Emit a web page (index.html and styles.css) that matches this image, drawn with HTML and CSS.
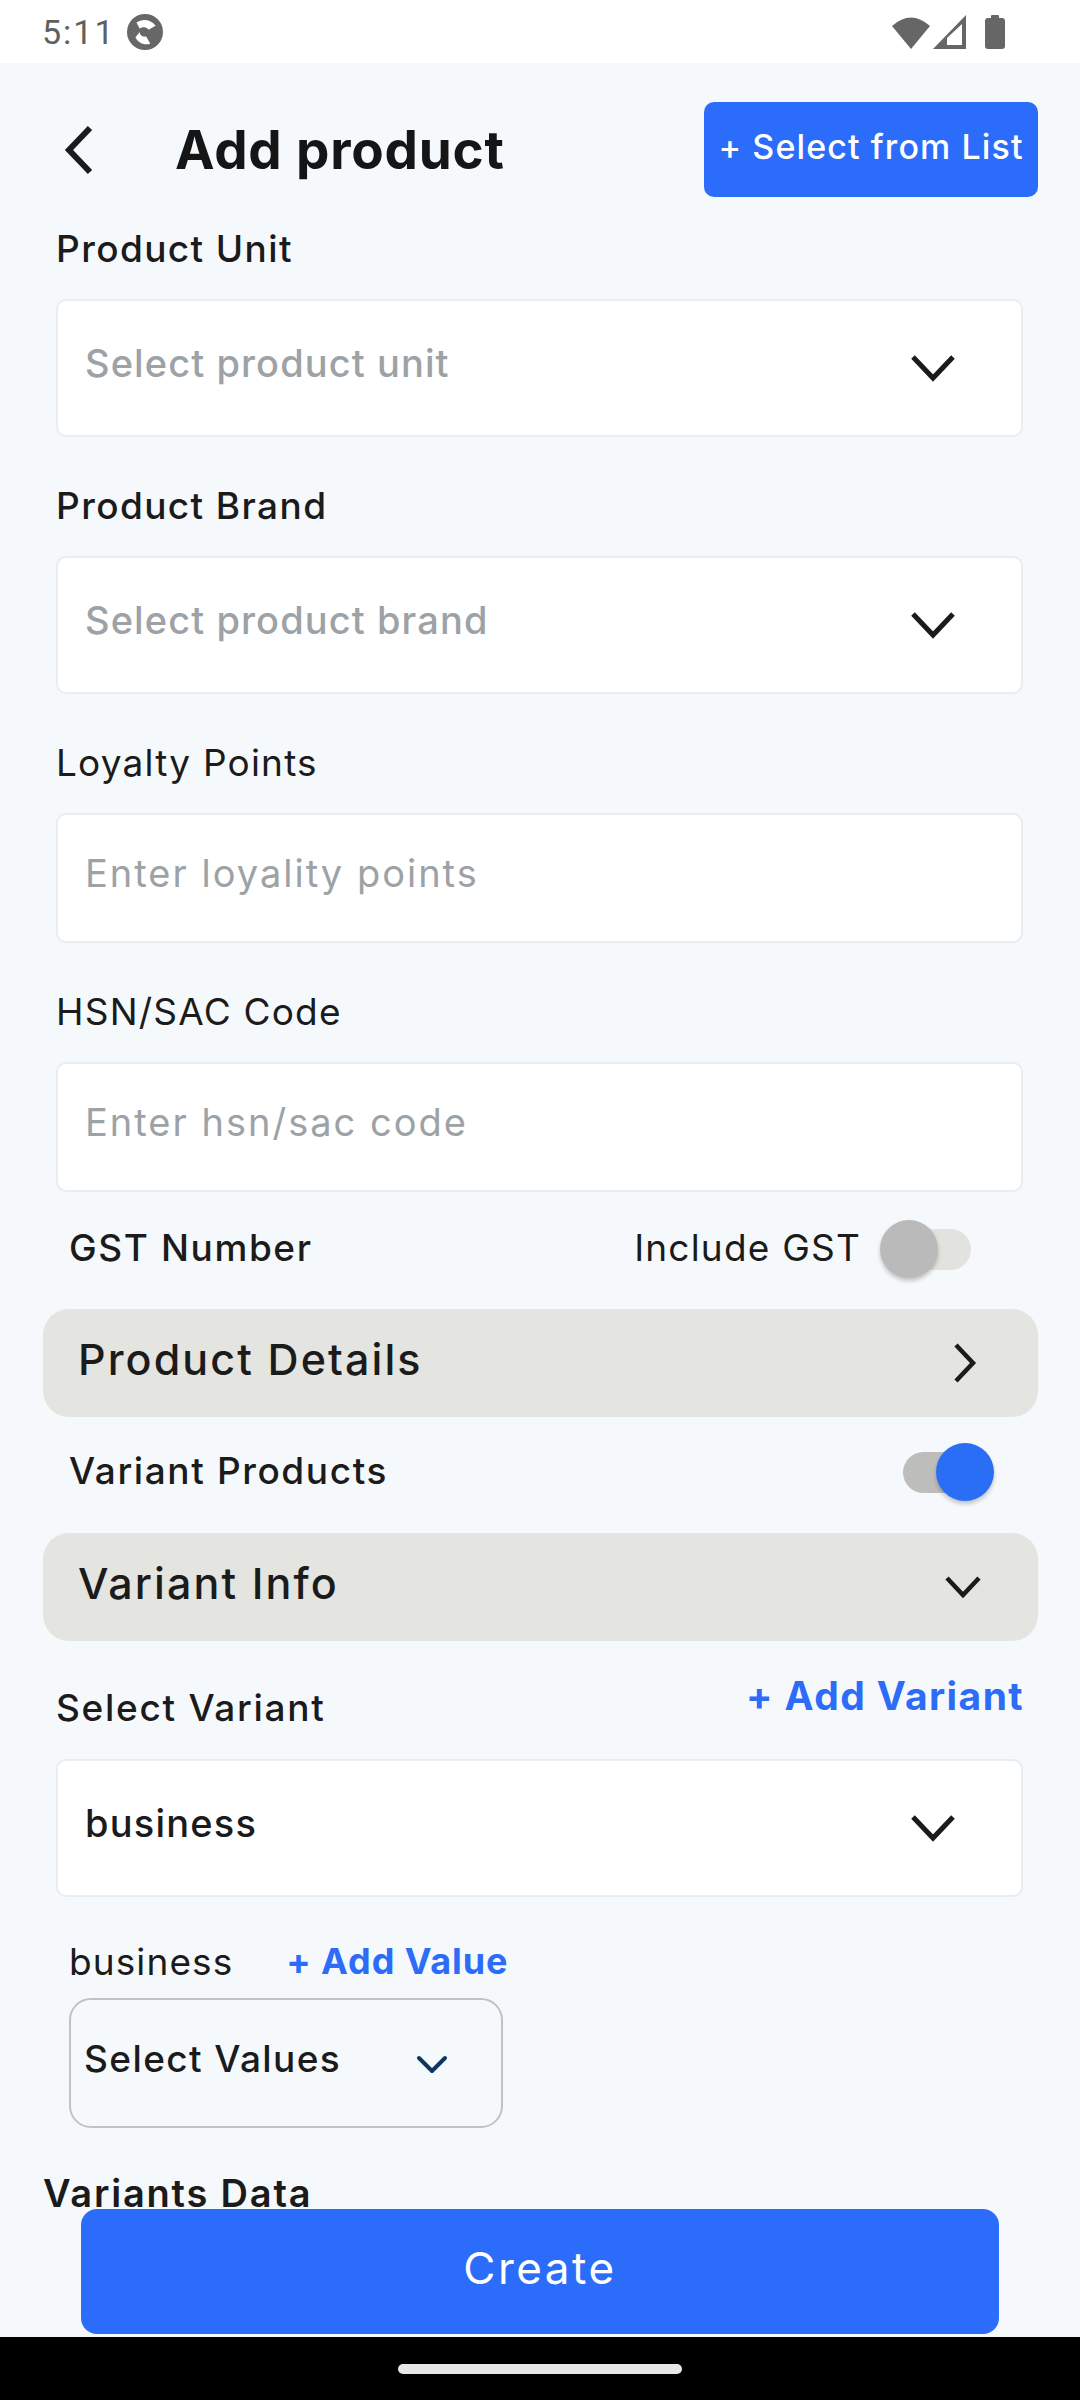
FILE: index.html
```html
<!DOCTYPE html>
<html>
<head>
<meta charset="utf-8">
<link rel="stylesheet" href="styles.css">
</head>
<body>
<div class="phone">
  <div class="statusbar">
    <span class="time">5:11</span>
    <svg class="app-icon" width="36" height="36" viewBox="0 0 34 34">
      <circle cx="17" cy="17" r="17" fill="#676767"/>
      <path d="M9 8 C14 4 23 5 27 11 L20 15 C18 12 14 12 12 14 Z" fill="#fff"/>
      <path d="M8 22 C10 27 16 30 22 28 L18 21 C15 22 12 20 12 17 Z" fill="#fff"/>
      <circle cx="17" cy="17" r="4" fill="#676767"/>
    </svg>
    <div class="sys-icons">
      <svg width="38" height="34" viewBox="0 0 38 34"><path d="M19 34 L0 11 Q19 -6 38 11 Z" fill="#666"/></svg>
      <svg width="33" height="34" viewBox="0 0 33 34"><path d="M33 0 L33 34 L0 34 Z" fill="#666"/><path d="M14 30 L14 23 L29 9 L29 30 Z" fill="#fff"/></svg>
      <svg width="20" height="34" viewBox="0 0 20 34"><rect x="6" y="0" width="8" height="4" rx="1" fill="#666"/><rect x="0" y="3" width="20" height="31" rx="3" fill="#666"/></svg>
    </div>
  </div>

  <div class="screen">
    <div class="scroll">
      <header class="topbar">
        <svg class="back" width="30" height="50" viewBox="0 0 30 50"><path d="M26 3 L5 25 L26 47" fill="none" stroke="#1b1b1b" stroke-width="6"/></svg>
        <h1 class="title">Add product</h1>
        <button class="list-btn">+ Select from List</button>
      </header>

      <div class="form">
        <div class="field field-first">
          <div class="label label-medium">Product Unit</div>
          <div class="box box-select">
            <span class="ph ph-medium">Select product unit</span>
            <svg class="chev" width="46" height="28" viewBox="0 0 46 28"><path d="M3 3 L23 24 L43 3" fill="none" stroke="#1b1b1b" stroke-width="5"/></svg>
          </div>
        </div>

        <div class="field">
          <div class="label label-medium">Product Brand</div>
          <div class="box box-select">
            <span class="ph ph-medium">Select product brand</span>
            <svg class="chev" width="46" height="28" viewBox="0 0 46 28"><path d="M3 3 L23 24 L43 3" fill="none" stroke="#1b1b1b" stroke-width="5"/></svg>
          </div>
        </div>

        <div class="field">
          <div class="label">Loyalty Points</div>
          <div class="box box-input">
            <span class="ph">Enter loyality points</span>
          </div>
        </div>

        <div class="field">
          <div class="label">HSN/SAC Code</div>
          <div class="box box-input">
            <span class="ph">Enter hsn/sac code</span>
          </div>
        </div>

        <div class="row row-gst">
          <span class="row-text">GST Number</span>
          <div class="gst-right">
            <span class="row-text row-text-regular">Include GST</span>
            <div class="switch">
              <div class="track"></div>
              <div class="thumb"></div>
            </div>
          </div>
        </div>

        <div class="bar bar-details">
          <span class="bar-title">Product Details</span>
          <svg class="chev-right" width="24" height="40" viewBox="0 0 24 40"><path d="M3 2 L20 20 L3 38" fill="none" stroke="#1b1b1b" stroke-width="4.5"/></svg>
        </div>

        <div class="row row-variant">
          <span class="row-text">Variant Products</span>
          <div class="switch switch-on">
            <div class="track"></div>
            <div class="thumb"></div>
          </div>
        </div>

        <div class="bar bar-info">
          <span class="bar-title">Variant Info</span>
          <svg class="chev-down-sm" width="36" height="22" viewBox="0 0 36 22"><path d="M2 2 L18 19 L34 2" fill="none" stroke="#1b1b1b" stroke-width="4.5"/></svg>
        </div>

        <div class="variant-head">
          <span class="label label-medium variant-label">Select Variant</span>
          <span class="link link-variant">+ Add Variant</span>
        </div>
        <div class="box box-select box-variant">
          <span class="value">business</span>
          <svg class="chev" width="46" height="28" viewBox="0 0 46 28"><path d="M3 3 L23 24 L43 3" fill="none" stroke="#1b1b1b" stroke-width="5"/></svg>
        </div>

        <div class="value-head">
          <span class="value-label">business</span>
          <span class="link link-value">+ Add Value</span>
        </div>
        <div class="values-box">
          <span class="values-text">Select Values</span>
          <svg class="chev-navy" width="32" height="19" viewBox="0 0 32 19"><path d="M3 3 L16 16 L29 3" fill="none" stroke="#0b3760" stroke-width="4" stroke-linecap="round" stroke-linejoin="round"/></svg>
        </div>

        <div class="section-title">Variants Data</div>
      </div>
    </div>

    <div class="footer">
      <button class="create">Create</button>
    </div>
  </div>

  <div class="navbar"><div class="pill"></div></div>
</div>
</body>
</html>
```

FILE: styles.css
```css
* { box-sizing: border-box; }
html, body { margin: 0; padding: 0; }
body {
  width: 1080px;
  height: 2400px;
  overflow: hidden;
  font-family: Inter, "Noto Sans", sans-serif;
  color: #1b1b1b;
  background: #f6f9fc;
}
.phone { width: 1080px; height: 2400px; display: flex; flex-direction: column; }

/* status bar */
.statusbar {
  height: 63px;
  background: #ffffff;
  display: flex;
  align-items: center;
  padding: 0 75px 0 42px;
}
.time {
  font-family: Roboto, sans-serif;
  font-size: 34px;
  color: #5f5f5f;
  letter-spacing: 2px;
}
.app-icon { margin-left: 11px; }
.sys-icons { margin-left: auto; display: flex; align-items: center; }
.sys-icons svg:nth-child(2) { margin-left: 3px; }
.sys-icons svg:nth-child(3) { margin-left: 19px; }

/* screen */
.screen {
  flex: 1;
  display: flex;
  flex-direction: column;
  background: #f6f9fc;
  min-height: 0;
}
.scroll { flex: 1; min-height: 0; }

.topbar {
  display: flex;
  align-items: center;
  height: 95px;
  margin-top: 39px;
  padding: 0 42px 0 64px;
}
.back { display: block; }
.title {
  margin: 0 0 0 81px;
  font-size: 53px;
  font-weight: 700;
  letter-spacing: 0.8px;
  color: #151515;
}
.list-btn {
  margin-left: auto;
  width: 334px;
  height: 95px;
  border: none;
  border-radius: 10px;
  background: #2b6cfa;
  color: #ffffff;
  font-family: Inter, sans-serif;
  font-size: 34px;
  font-weight: 500;
  letter-spacing: 1.1px;
  padding: 0 0 6px 0;
  white-space: nowrap;
}

.form { padding: 0 42px 0 43px; }

.field { margin: 45px 15px 0 13px; }
.field-first { margin-top: 28px; }
.label {
  height: 48px;
  line-height: 48px;
  font-size: 37px;
  font-weight: 400;
  letter-spacing: 1.2px;
  color: #1b1b1b;
  margin-bottom: 26px;
}
.label-medium { font-weight: 500; letter-spacing: 1.4px; }

.box {
  background: #ffffff;
  border: 2px solid #e8edf2;
  border-radius: 10px;
  display: flex;
  align-items: center;
  padding: 0 65px 0 27px;
}
.box-select { height: 138px; justify-content: space-between; }
.box-input { height: 130px; }
.ph {
  font-size: 38px;
  color: #9ca2a6;
  font-weight: 400;
  letter-spacing: 2px;
  margin-bottom: 10px;
}
.ph-medium { font-weight: 500; letter-spacing: 1.1px; }
.chev { display: block; }

/* rows with toggles */
.row {
  height: 60px;
  display: flex;
  align-items: center;
  justify-content: space-between;
  padding-left: 26px;
}
.row-gst { margin-top: 27px; padding-right: 56px; }
.row-variant { margin-top: 25px; padding-right: 44px; }
.row-text {
  font-size: 37px;
  font-weight: 500;
  letter-spacing: 1.6px;
  color: #1b1b1b;
  margin-bottom: 4px;
}
.row-text-regular { font-weight: 400; letter-spacing: 1.2px; }
.gst-right { display: flex; align-items: center; gap: 19px; }

.switch { position: relative; width: 102px; height: 58px; }
.track {
  position: absolute;
  left: 11px;
  top: 9px;
  width: 80px;
  height: 41px;
  border-radius: 21px;
  background: #e2e2de;
}
.thumb {
  position: absolute;
  left: 0;
  top: 0;
  width: 58px;
  height: 58px;
  border-radius: 50%;
  background: #bababa;
  box-shadow: 0 3px 4px rgba(0, 0, 0, 0.22);
}
.switch-on .track { background: #bdbdbb; }
.switch-on .thumb { left: 44px; background: #2a6ef6; }

/* grey bars */
.bar {
  height: 108px;
  border-radius: 26px;
  background: #e4e4e0;
  display: flex;
  align-items: center;
  justify-content: space-between;
  padding-left: 35px;
}
.bar-details { margin-top: 30px; padding-right: 61px; }
.bar-info { margin-top: 31px; padding-right: 57px; }
.bar-title {
  font-size: 43px;
  font-weight: 500;
  letter-spacing: 2.1px;
  color: #1b1b1b;
  margin-bottom: 8px;
}
.chev-right, .chev-down-sm { display: block; }

/* variant section */
.variant-head {
  display: flex;
  justify-content: space-between;
  align-items: flex-start;
  margin: 30px 14px 0 13px;
}
.variant-label { margin: 13px 0 0 0; letter-spacing: 1.7px; }
.link {
  color: #2d6cf6;
  font-weight: 700;
}
.link-variant { font-size: 39px; height: 50px; line-height: 50px; letter-spacing: 1.4px; }
.box-variant { margin: 27px 15px 0 13px; }
.value {
  font-size: 38px;
  font-weight: 500;
  letter-spacing: 1.2px;
  color: #1b1b1b;
  margin-bottom: 10px;
}

.value-head {
  display: flex;
  align-items: center;
  height: 48px;
  margin-top: 40px;
  padding-left: 26px;
  gap: 53px;
}
.value-label { font-size: 37px; font-weight: 400; letter-spacing: 1.1px; color: #1b1b1b; }
.link-value { font-size: 36px; letter-spacing: 0.9px; }

.values-box {
  margin: 13px 0 0 26px;
  width: 434px;
  height: 130px;
  border: 2px solid #c2c2c2;
  border-radius: 22px;
  display: flex;
  align-items: center;
  justify-content: space-between;
  padding: 0 53px 0 13px;
}
.values-text {
  font-size: 37px;
  font-weight: 500;
  letter-spacing: 1.4px;
  color: #1b1b1b;
  margin-bottom: 10px;
}
.chev-navy { display: block; margin-top: 3px; }

.section-title {
  margin-top: 49px;
  height: 32px;
  line-height: 32px;
  font-size: 38px;
  font-weight: 600;
  letter-spacing: 1.8px;
  color: #1b1b1b;
}

/* footer */
.footer {
  height: 128px;
  padding: 0 81px 3px;
}
.create {
  width: 100%;
  height: 125px;
  border: none;
  border-radius: 16px;
  background: #2b6cfa;
  color: #ffffff;
  font-family: Inter, sans-serif;
  font-size: 44px;
  font-weight: 400;
  letter-spacing: 2.5px;
  padding-bottom: 8px;
}

.navbar {
  height: 63px;
  background: #000000;
  display: flex;
  justify-content: center;
  padding-top: 27px;
}
.pill {
  width: 284px;
  height: 10px;
  border-radius: 5px;
  background: #e8e8e8;
}
```
